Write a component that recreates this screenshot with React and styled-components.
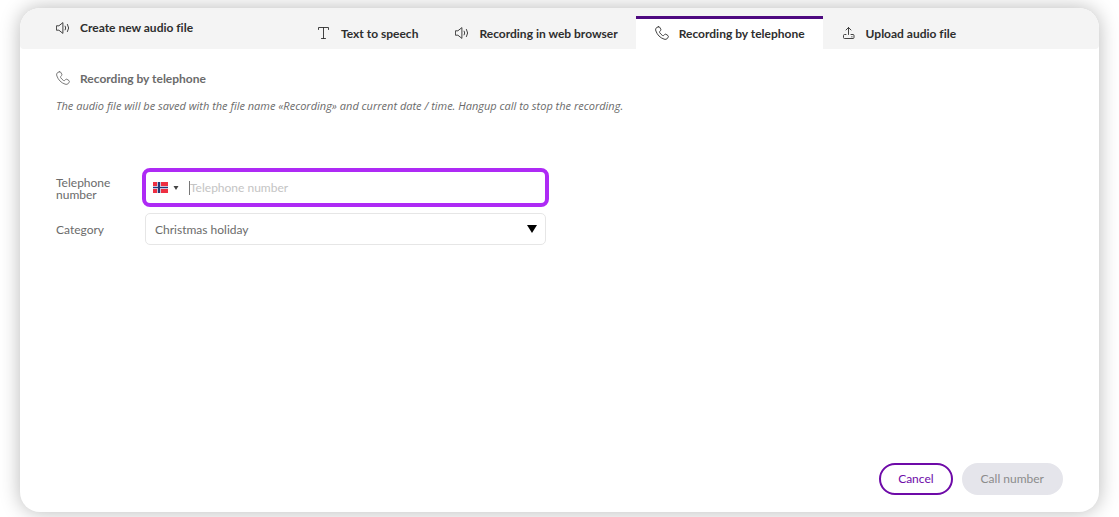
import React, { useState } from "react";
import styled, { createGlobalStyle } from "styled-components";

const GlobalStyle = createGlobalStyle`
  *, *::before, *::after { box-sizing: border-box; }
  body {
    margin: 0;
    background: #fff;
    color: #6b6b6b;
    font-family: Lato, "Liberation Sans", sans-serif;
    font-size: 12px;
    font-variant-ligatures: none;
  }
  button, input, select { font: inherit; font-variant-ligatures: none; }
`;

const Page = styled.div`
  display: flex;
  min-height: 100vh;
  padding: 8px 20px 5px;
  overflow: hidden;
`;

const Card = styled.main`
  display: flex;
  flex: 1;
  flex-direction: column;
  border-radius: 20px;
  background: #fff;
  box-shadow: 0 0 20px rgba(0, 0, 0, 0.28);
`;

const Header = styled.header`
  display: flex;
  height: 41px;
  border-radius: 20px 20px 4px 4px;
  background: #f4f4f4;
  color: #2e2e2e;
`;

const Title = styled.h1`
  display: flex;
  flex: 0 0 278px;
  align-items: center;
  gap: 10px;
  height: 39px;
  margin: 0;
  padding-left: 36px;
  font-size: 12px;
  font-weight: 700;
`;

const Tabs = styled.div`
  display: flex;
  align-items: flex-end;
`;

const Tab = styled.button`
  display: flex;
  align-items: center;
  gap: 10px;
  height: 33px;
  padding: 0 18px 2px 19px;
  border: 0;
  border-top: 3px solid ${(p) => (p.$active ? "#4e0a80" : "transparent")};
  background: ${(p) => (p.$active ? "#fff" : "transparent")};
  color: #2e2e2e;
  font-weight: 700;
  white-space: nowrap;
  cursor: pointer;
`;

const Icon = styled.svg`
  flex: none;
  width: 14px;
  height: 14px;
  fill: none;
  stroke: currentColor;
  stroke-width: 0.9;
  stroke-linecap: round;
  stroke-linejoin: round;
`;

const Content = styled.section`
  flex: 1;
  padding: 22px 36px 0;
`;

const SectionTitle = styled.h2`
  display: flex;
  align-items: center;
  gap: 10px;
  height: 14px;
  margin: 0;
  font-size: 12px;
  font-weight: 700;
`;

const Description = styled.p`
  margin: 13px 0 58px;
  font-family: "Open Sans", Lato, sans-serif;
  font-size: 11px;
  font-style: italic;
  line-height: 15px;
`;

const Form = styled.form`
  display: grid;
  grid-template-columns: 89px minmax(0, 401px);
  row-gap: 9px;
  align-items: center;
`;

const Label = styled.label`
  padding: 2px 20px 0 0;
  line-height: 12px;
`;

const PhoneField = styled.div`
  display: flex;
  align-items: center;
  height: 39px;
  margin: -3px;
  padding-left: 7px;
  border: 4px solid #ae2af5;
  border-radius: 8px;
`;

const CountryButton = styled.button`
  display: flex;
  align-items: center;
  gap: 5px;
  padding: 0;
  border: 0;
  background: none;
  cursor: pointer;
`;

const Flag = styled.svg`
  width: 15px;
  height: 11px;
`;

const Caret = styled.svg`
  width: 6px;
  height: 4px;
  fill: #444;
`;

const TextCursor = styled.span`
  width: 1px;
  height: 14px;
  margin-left: 10px;
  background: #777;
`;

const PhoneInput = styled.input`
  flex: 1;
  min-width: 0;
  height: 100%;
  padding: 0;
  border: 0;
  outline: 0;
  background: none;
  color: #6b6b6b;
  &::placeholder { color: #c4c4c4; opacity: 1; }
`;

const SelectWrap = styled.div`
  position: relative;
`;

const Select = styled.select`
  display: block;
  width: 100%;
  height: 32px;
  padding: 0 30px 0 9px;
  border: 1px solid #e6e6e6;
  border-radius: 5px;
  appearance: none;
  background: #fff;
  color: #6b6b6b;
`;

const SelectArrow = styled.svg`
  position: absolute;
  top: 12px;
  right: 9px;
  width: 10px;
  height: 8px;
  pointer-events: none;
`;

const Footer = styled.footer`
  display: flex;
  justify-content: flex-end;
  gap: 9px;
  padding: 0 36px 17px;
`;

const Button = styled.button`
  height: 32px;
  padding: 0 17px 2px;
  border: 2px solid ${(p) => (p.$outlined ? "#6e0aa8" : "#e5e5eb")};
  border-radius: 16px;
  background: ${(p) => (p.$outlined ? "#fff" : "#e5e5eb")};
  color: ${(p) => (p.$outlined ? "#6e0aa8" : "#8c8c8c")};
`;

const SpeakerIcon = () => (
  <Icon viewBox="0 0 14 14" aria-hidden="true">
    <path d="M.8 4.8h2.1L6.9 1.6v10.8L2.9 9.2H.8z" />
    <path d="M9.2 5.1q1.2 1.9 0 3.8M11.5 3.4q2.5 3.6 0 7.2" />
  </Icon>
);

const PhoneIcon = () => (
  <Icon viewBox="0 0 14 14" aria-hidden="true">
    <path d="M3.3.8 1.8 1.5C.5 2.2.4 3.6.9 5c1.4 3.9 4.2 6.8 8.1 8.1 1.4.5 2.8.3 3.6-1l.7-1.2c.3-.5.1-1-.3-1.3l-2-1.3c-.5-.3-1-.2-1.4.2l-.8.9c-.4.4-.8.4-1.3.1-1.2-.8-2.1-1.8-2.9-3-.3-.5-.2-.9.2-1.2l.8-.7c.4-.4.5-.9.2-1.4L4.6 1.1C4.3.7 3.8.6 3.3.8z" />
  </Icon>
);

const TextIcon = () => (
  <Icon viewBox="0 0 14 14" aria-hidden="true">
    <path d="M1.5 3.5V1.5h10v2M6.5 1.5v11M4.5 12.5h4" />
  </Icon>
);

const UploadIcon = () => (
  <Icon viewBox="0 0 14 14" aria-hidden="true">
    <path d="M6.500 8.500V1.500M4 4l2.500-2.500L9 4" />
    <path d="M4 8.500H2.500q-1 0-1 1v2q0 1 1 1h8.500q1 0 1-1v-2q0-1-1-1H9M9.700 10.800h.4" />
  </Icon>
);

const tabs = [
  { id: "speech", label: "Text to speech", Glyph: TextIcon },
  { id: "browser", label: "Recording in web browser", Glyph: SpeakerIcon },
  { id: "phone", label: "Recording by telephone", Glyph: PhoneIcon },
  { id: "upload", label: "Upload audio file", Glyph: UploadIcon },
];

export default function App() {
  const [active, setActive] = useState("phone");
  const [phone, setPhone] = useState("");

  return (
    <>
      <GlobalStyle />
      <Page>
        <Card>
          <Header>
            <Title><SpeakerIcon />Create new audio file</Title>
            <Tabs role="tablist">
              {tabs.map(({ id, label, Glyph }) => (
                <Tab
                  key={id}
                  type="button"
                  role="tab"
                  aria-selected={active === id}
                  $active={active === id}
                  onClick={() => setActive(id)}
                >
                  <Glyph />{label}
                </Tab>
              ))}
            </Tabs>
          </Header>
          <Content>
            <SectionTitle><PhoneIcon />Recording by telephone</SectionTitle>
            <Description>
              The audio file will be saved with the file name «Recording» and current date / time. Hangup call to stop the recording.
            </Description>
            <Form id="call-form" onSubmit={(e) => e.preventDefault()}>
              <Label htmlFor="phone">Telephone number</Label>
              <PhoneField>
                <CountryButton type="button" aria-label="Country: Norway">
                  <Flag viewBox="0 0 15 11" aria-hidden="true">
                    <path fill="#ee2f42" d="M0 0h15v11H0z" />
                    <path fill="#c9c4dc" d="M4 0h4v11H4zM0 4h15v3H0z" />
                    <path fill="#233a78" d="M5 0h2v11H5zM0 5h15v1H0z" />
                  </Flag>
                  <Caret viewBox="0 0 6 4" aria-hidden="true"><path d="M.5 0h5L3 4z" /></Caret>
                </CountryButton>
                <TextCursor />
                <PhoneInput
                  id="phone"
                  type="tel"
                  placeholder="Telephone number"
                  value={phone}
                  onChange={(e) => setPhone(e.target.value)}
                />
              </PhoneField>
              <Label htmlFor="category">Category</Label>
              <SelectWrap>
                <Select id="category" defaultValue="christmas">
                  <option value="christmas">Christmas holiday</option>
                </Select>
                <SelectArrow viewBox="0 0 10 8" aria-hidden="true"><path d="M0 0h10L5 8z" /></SelectArrow>
              </SelectWrap>
            </Form>
          </Content>
          <Footer>
            <Button type="button" $outlined>Cancel</Button>
            <Button type="submit" form="call-form" disabled={!phone}>Call number</Button>
          </Footer>
        </Card>
      </Page>
    </>
  );
}
